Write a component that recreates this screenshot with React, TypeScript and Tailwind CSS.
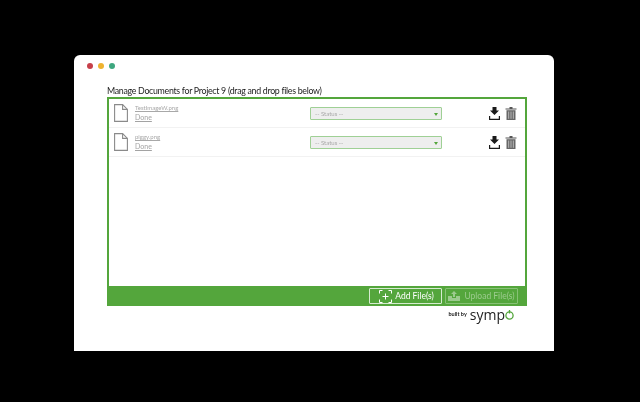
function FileIcon() {
  return (
    <svg width="14" height="18" viewBox="0 0 14 18" fill="none" stroke="#8a8a8a" strokeWidth="1.1" className="shrink-0">
      <path d="M.6.6H8.6L13.4 5.4V17.4H.6Z" />
      <path d="M8.6.6V5.4H13.4" />
    </svg>
  );
}

function Download() {
  return (
    <svg width="11" height="13" viewBox="0 0 11 13" fill="none">
      <path d="M3.5 0H7.5V3.5H10L5.5 8L1 3.5H3.5Z" fill="#1a1a1a" />
      <path d="M.6 9V12.4H10.4V9" stroke="#1a1a1a" strokeWidth="1.2" />
    </svg>
  );
}

function Trash() {
  return (
    <svg width="12" height="13" viewBox="0 0 12 13" fill="none">
      <path d="M.5 1.5H11.5V2.5H.5Z M4.5 0H7.5V1.5H4.5Z" fill="#555" />
      <path d="M1.5 3.2H10.5V13H1.5Z" fill="#666" />
      <path d="M3.7 4.5V11.8M6 4.5V11.8M8.3 4.5V11.8" stroke="#c4c4c4" strokeWidth="0.9" />
    </svg>
  );
}

function Row({ name }: { name: string }) {
  return (
    <div className="flex h-[29px] items-center border-b border-[#f2f2f2] pl-[5px] pr-[8px]">
      <FileIcon />
      <div className="ml-[7px] w-[175px] leading-none">
        <div className="text-[6px] text-[#a8a8a8] underline">{name}</div>
        <div className="mt-[3px] text-[7px] text-[#a3a3a3] underline">Done</div>
      </div>
      <div className="flex h-[13px] w-[132px] items-center justify-between rounded-[1px] border border-[#9fd095] bg-[#eeeeee] pl-[4px] pr-[3px] text-[6px] text-[#a8a8a8]">
        <span>-- Status --</span>
        <span className="mt-[3px] h-0 w-0 border-x-[2.5px] border-t-[3px] border-x-transparent border-t-[#54a63c]" />
      </div>
      <div className="ml-auto flex items-center gap-[5px]">
        <Download />
        <Trash />
      </div>
    </div>
  );
}

export default function App() {
  return (
    <div className="h-[402px] w-[640px] bg-black pl-[74px] pt-[55px] font-['Lato','Inter',sans-serif]">
      <div className="h-[296px] w-[480px] rounded-t-[6px] bg-white pl-[33px] pt-[8px] blur-[0.35px]">
        <div className="ml-[-20px] flex gap-[5px]">
          <span className="h-[6px] w-[6px] rounded-full bg-[#c7404a]" />
          <span className="h-[6px] w-[6px] rounded-full bg-[#eeb32f]" />
          <span className="h-[6px] w-[6px] rounded-full bg-[#3ea77f]" />
        </div>
        <div className="mt-[16px] text-[8.8px] leading-[11px] tracking-[-0.29px] text-[#222222]">
          Manage Documents for Project 9 (drag and drop files below)
        </div>
        <div className="mt-[1px] flex h-[209px] w-[420px] flex-col border-x-2 border-t-2 border-[#54a63c]">
          <div className="flex-1 bg-white">
            <Row name="TestImageW.png" />
            <Row name="piggy.png" />
          </div>
          <div className="mx-[-2px] flex h-[20px] items-center justify-end gap-[3px] bg-[#54a63c] pr-[9px] text-[8.5px]">
            <div className="flex h-[16px] w-[73px] items-center justify-center gap-[3px] rounded-[1px] border border-[#d6ebd0] pl-[2px] text-white">
              <svg width="13" height="13" viewBox="0 0 13 13" fill="none" stroke="white" strokeWidth="1">
                <path d="M.5 3.5V.5H3.5M9.5.5H12.5V3.5M.5 9.5V12.5H3.5M9.5 12.5H12.5V9.5M6.5 3.5V9.5M3.5 6.5H9.5" />
              </svg>
              <span>Add File(s)</span>
            </div>
            <div className="flex h-[16px] w-[73px] items-center justify-center gap-[4px] rounded-[1px] border border-[#87c176] text-[#9ccb8e]">
              <svg width="12" height="10" viewBox="0 0 12 10" fill="#9ccb8e">
                <path d="M6 0L9 3H7V6H5V3H3Z" />
                <path d="M0 5H4V7H8V5H12V10H0Z" />
              </svg>
              <span>Upload File(s)</span>
            </div>
          </div>
        </div>
        <div className="mt-[2px] flex w-[407px] items-center justify-end gap-[3px] leading-none">
          <span className="text-[5.5px] font-bold text-[#222]">built by</span>
          <span className="flex items-center font-['Open_Sans',sans-serif] text-[14px] text-[#222]">
            symp
            <svg width="9" height="10" viewBox="0 0 9 10" fill="none" stroke="#54a63c" strokeWidth="1.3" className="mt-[-1px]">
              <circle cx="4.5" cy="5.5" r="3.6" />
              <path d="M4.5 0V3.5" />
            </svg>
          </span>
        </div>
      </div>
    </div>
  );
}
